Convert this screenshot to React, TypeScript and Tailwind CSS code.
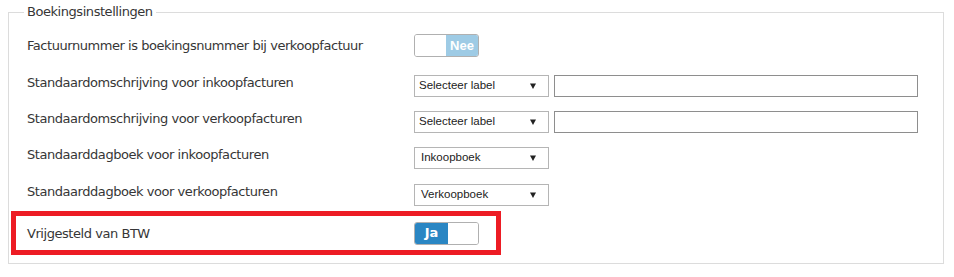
const labelFont = { fontFamily: '"DejaVu Sans", Verdana, sans-serif' };

function Caret() {
  return (
    <svg width="6" height="6" viewBox="0 0 6 6" className="shrink-0">
      <path d="M0 0.5 L6 0.5 L3 6 Z" fill="#222" />
    </svg>
  );
}

function FakeSelect({ value, pad = "pl-[4px]" }: { value: string; pad?: string }) {
  return (
    <div
      className={`flex h-[22px] w-[135px] shrink-0 items-center justify-between border border-[#b5b5b5] bg-white ${pad} pr-[12px] text-[11.5px] text-[#222]`}
      style={{ fontFamily: '"Liberation Sans", Arial, sans-serif' }}
    >
      <span>{value}</span>
      <Caret />
    </div>
  );
}

function Row({
  label,
  children,
  className = "",
}: {
  label: string;
  children: React.ReactNode;
  className?: string;
}) {
  return (
    <div className={`flex items-start ${className}`}>
      <div className="w-[387px] shrink-0 text-[13px] leading-4 tracking-[-0.45px] text-[#363636]">
        {label}
      </div>
      {children}
    </div>
  );
}

export default function App() {
  return (
    <div className="h-[277px] w-[954px] bg-white pl-[8px] pt-[4px]" style={labelFont}>
      <fieldset className="h-[260px] w-[936px] border border-[#dcdcdc] pl-[18px] pr-[18px]">
        <legend className="-ml-[3px] px-[3px] text-[13px] leading-4 tracking-[-0.45px] text-[#363636]">
          Boekingsinstellingen
        </legend>

        <div className="mt-[14px] flex items-center">
          <div className="w-[387px] shrink-0 text-[13px] leading-4 tracking-[-0.45px] text-[#363636]">
            Factuurnummer is boekingsnummer bij verkoopfactuur
          </div>
          <div className="flex h-[23px] w-[65px] overflow-hidden rounded-[3px] border border-[#b0b0b0]">
            <div className="w-[31px] bg-white" />
            <div
              className="flex flex-1 items-center justify-center bg-[#9ecbe5] text-[13px] font-bold text-white"
              style={{ fontFamily: '"Liberation Sans", Arial, sans-serif' }}
            >
              Nee
            </div>
          </div>
        </div>

        <Row label="Standaardomschrijving voor inkoopfacturen" className="mt-[18px]">
          <FakeSelect value="Selecteer label" />
          <div className="ml-[5px] h-[22px] w-[364px] border border-[#8e8e8e] bg-white" />
        </Row>

        <Row label="Standaardomschrijving voor verkoopfacturen" className="mt-[14px]">
          <FakeSelect value="Selecteer label" />
          <div className="ml-[5px] h-[22px] w-[364px] border border-[#8e8e8e] bg-white" />
        </Row>

        <Row label="Standaarddagboek voor inkoopfacturen" className="mt-[14px]">
          <FakeSelect value="Inkoopboek" pad="pl-[6px]" />
        </Row>

        <Row label="Standaarddagboek voor verkoopfacturen" className="mt-[15px]">
          <FakeSelect value="Verkoopboek" pad="pl-[6px]" />
        </Row>

        <div className="-ml-[16px] mt-[5px] flex h-[44px] w-[490px] items-center border-[5px] border-[#ed1c24] pl-[11px]">
          <div className="w-[387px] shrink-0 pt-[2px] text-[13px] leading-4 tracking-[-0.45px] text-[#363636]">
            Vrijgesteld van BTW
          </div>
          <div className="flex h-[23px] w-[65px] overflow-hidden rounded-[3px] border border-[#b0b0b0]">
            <div className="flex w-[33px] items-center justify-center bg-[#2a86c3] text-[13px] font-bold text-white">
              Ja
            </div>
            <div className="flex-1 bg-white" />
          </div>
        </div>
      </fieldset>
    </div>
  );
}
